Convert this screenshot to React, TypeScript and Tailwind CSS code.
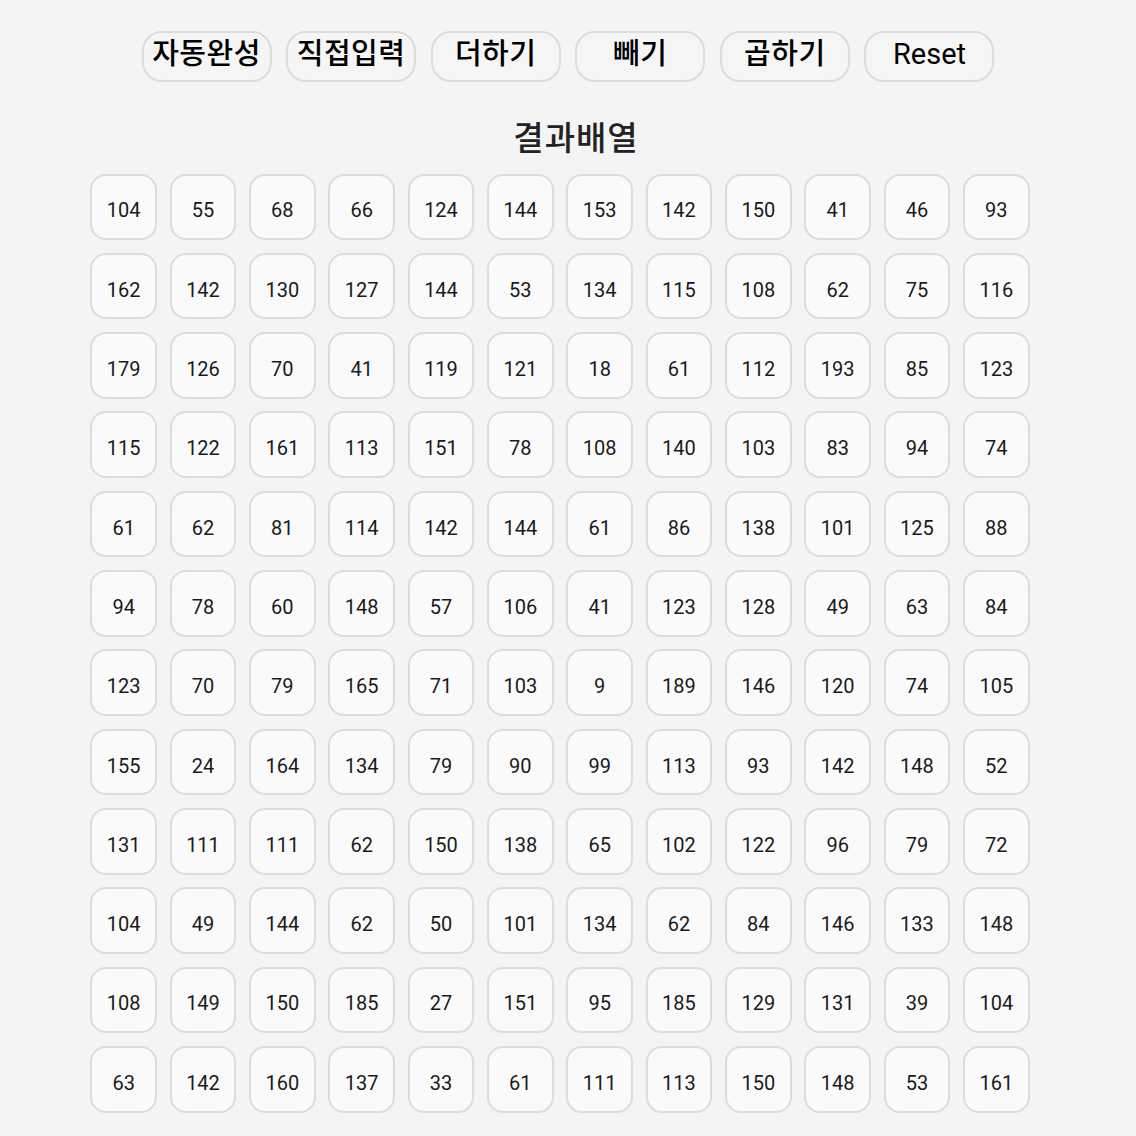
import React from "react";

const data: number[][] = [
  [104, 55, 68, 66, 124, 144, 153, 142, 150, 41, 46, 93],
  [162, 142, 130, 127, 144, 53, 134, 115, 108, 62, 75, 116],
  [179, 126, 70, 41, 119, 121, 18, 61, 112, 193, 85, 123],
  [115, 122, 161, 113, 151, 78, 108, 140, 103, 83, 94, 74],
  [61, 62, 81, 114, 142, 144, 61, 86, 138, 101, 125, 88],
  [94, 78, 60, 148, 57, 106, 41, 123, 128, 49, 63, 84],
  [123, 70, 79, 165, 71, 103, 9, 189, 146, 120, 74, 105],
  [155, 24, 164, 134, 79, 90, 99, 113, 93, 142, 148, 52],
  [131, 111, 111, 62, 150, 138, 65, 102, 122, 96, 79, 72],
  [104, 49, 144, 62, 50, 101, 134, 62, 84, 146, 133, 148],
  [108, 149, 150, 185, 27, 151, 95, 185, 129, 131, 39, 104],
  [63, 142, 160, 137, 33, 61, 111, 113, 150, 148, 53, 161],
];

const buttons = ["자동완성", "직접입력", "더하기", "빼기", "곱하기"];

export default function App() {
  return (
    <div
      className="min-h-[1136px] w-full bg-[#f4f4f4] text-[#111]"
      style={{ fontFamily: 'Roboto, "Noto Sans CJK KR", sans-serif' }}
    >
      <div className="flex justify-center gap-[14.6px] pt-[30.5px]">
        {buttons.map((b) => (
          <button
            key={b}
            className="flex h-[51px] w-[130px] items-center justify-center rounded-[20px] border-2 border-[#dcdcdc] bg-[#f5f5f5] pb-[3px] text-[29px] font-medium leading-none tracking-[0.5px] text-black"
          >
            {b}
          </button>
        ))}
        <button className="flex h-[51px] w-[130px] items-center justify-center rounded-[20px] border-2 border-[#dcdcdc] bg-[#f5f5f5] pb-[3px] text-[29px] font-normal leading-none text-black">
          Reset
        </button>
      </div>
      <div className="mt-[37px] pl-[16px] text-center text-[33px] font-medium leading-[40px] tracking-[1px] text-[#222]">
        결과배열
      </div>
      <div className="ml-[90.33px] mt-[15px] grid w-[939.33px] grid-cols-12 gap-[12.67px] pb-[30px]">
        {data.flat().map((n, i) => (
          <div
            key={i}
            className="flex h-[66.67px] items-center justify-center rounded-[16px] border-2 border-[#dcdcdc] bg-[#fafafa] pt-[7px] text-[20px] text-[#1a1a1a]"
          >
            {n}
          </div>
        ))}
      </div>
    </div>
  );
}
